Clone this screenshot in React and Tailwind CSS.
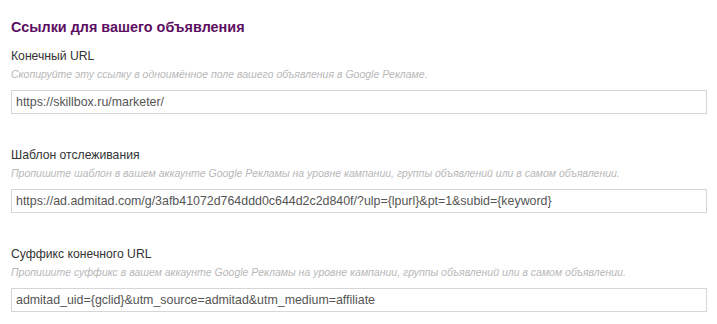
import React from 'react';

const fields = [
    {
        label: 'Конечный URL',
        hint: 'Скопируйте эту ссылку в одноимённое поле вашего объявления в Google Рекламе.',
        value: 'https://skillbox.ru/marketer/',
    },
    {
        label: 'Шаблон отслеживания',
        hint: 'Пропишите шаблон в вашем аккаунте Google Рекламы на уровне кампании, группы объявлений или в самом объявлении.',
        value: 'https://ad.admitad.com/g/3afb41072d764ddd0c644d2c2d840f/?ulp={lpurl}&pt=1&subid={keyword}',
    },
    {
        label: 'Суффикс конечного URL',
        hint: 'Пропишите суффикс в вашем аккаунте Google Рекламы на уровне кампании, группы объявлений или в самом объявлении.',
        value: 'admitad_uid={gclid}&utm_source=admitad&utm_medium=affiliate',
    },
];

const LinkField = ({ label, hint, value }) => (
    <div className="flex flex-col">
        <label className="text-[12.2px] leading-[16px] text-[#333333]">{label}</label>
        <p className="mt-[3px] text-[10.5px] leading-[14px] italic text-[#b8b8b8]">{hint}</p>
        <input
            type="text"
            readOnly
            value={value}
            className="mt-[9px] h-[24px] w-full border border-[#d6d6d6] bg-white px-[4px] text-[12.4px] text-[#555555] outline-none"
        />
    </div>
);

export default function App() {
    return (
        <div
            className="min-h-[324px] w-[717px] bg-white pl-[11px] pr-[10px] pt-[18px]"
            style={{ fontFamily: '"Liberation Sans", Arial, sans-serif' }}
        >
            <h2 className="text-[14.4px] font-bold leading-[18px] text-[#5c0f62]">
                Ссылки для вашего объявления
            </h2>
            <div className="mt-[12px] flex flex-col gap-[33px]">
                {fields.map((f) => (
                    <LinkField key={f.label} {...f} />
                ))}
            </div>
        </div>
    );
}
